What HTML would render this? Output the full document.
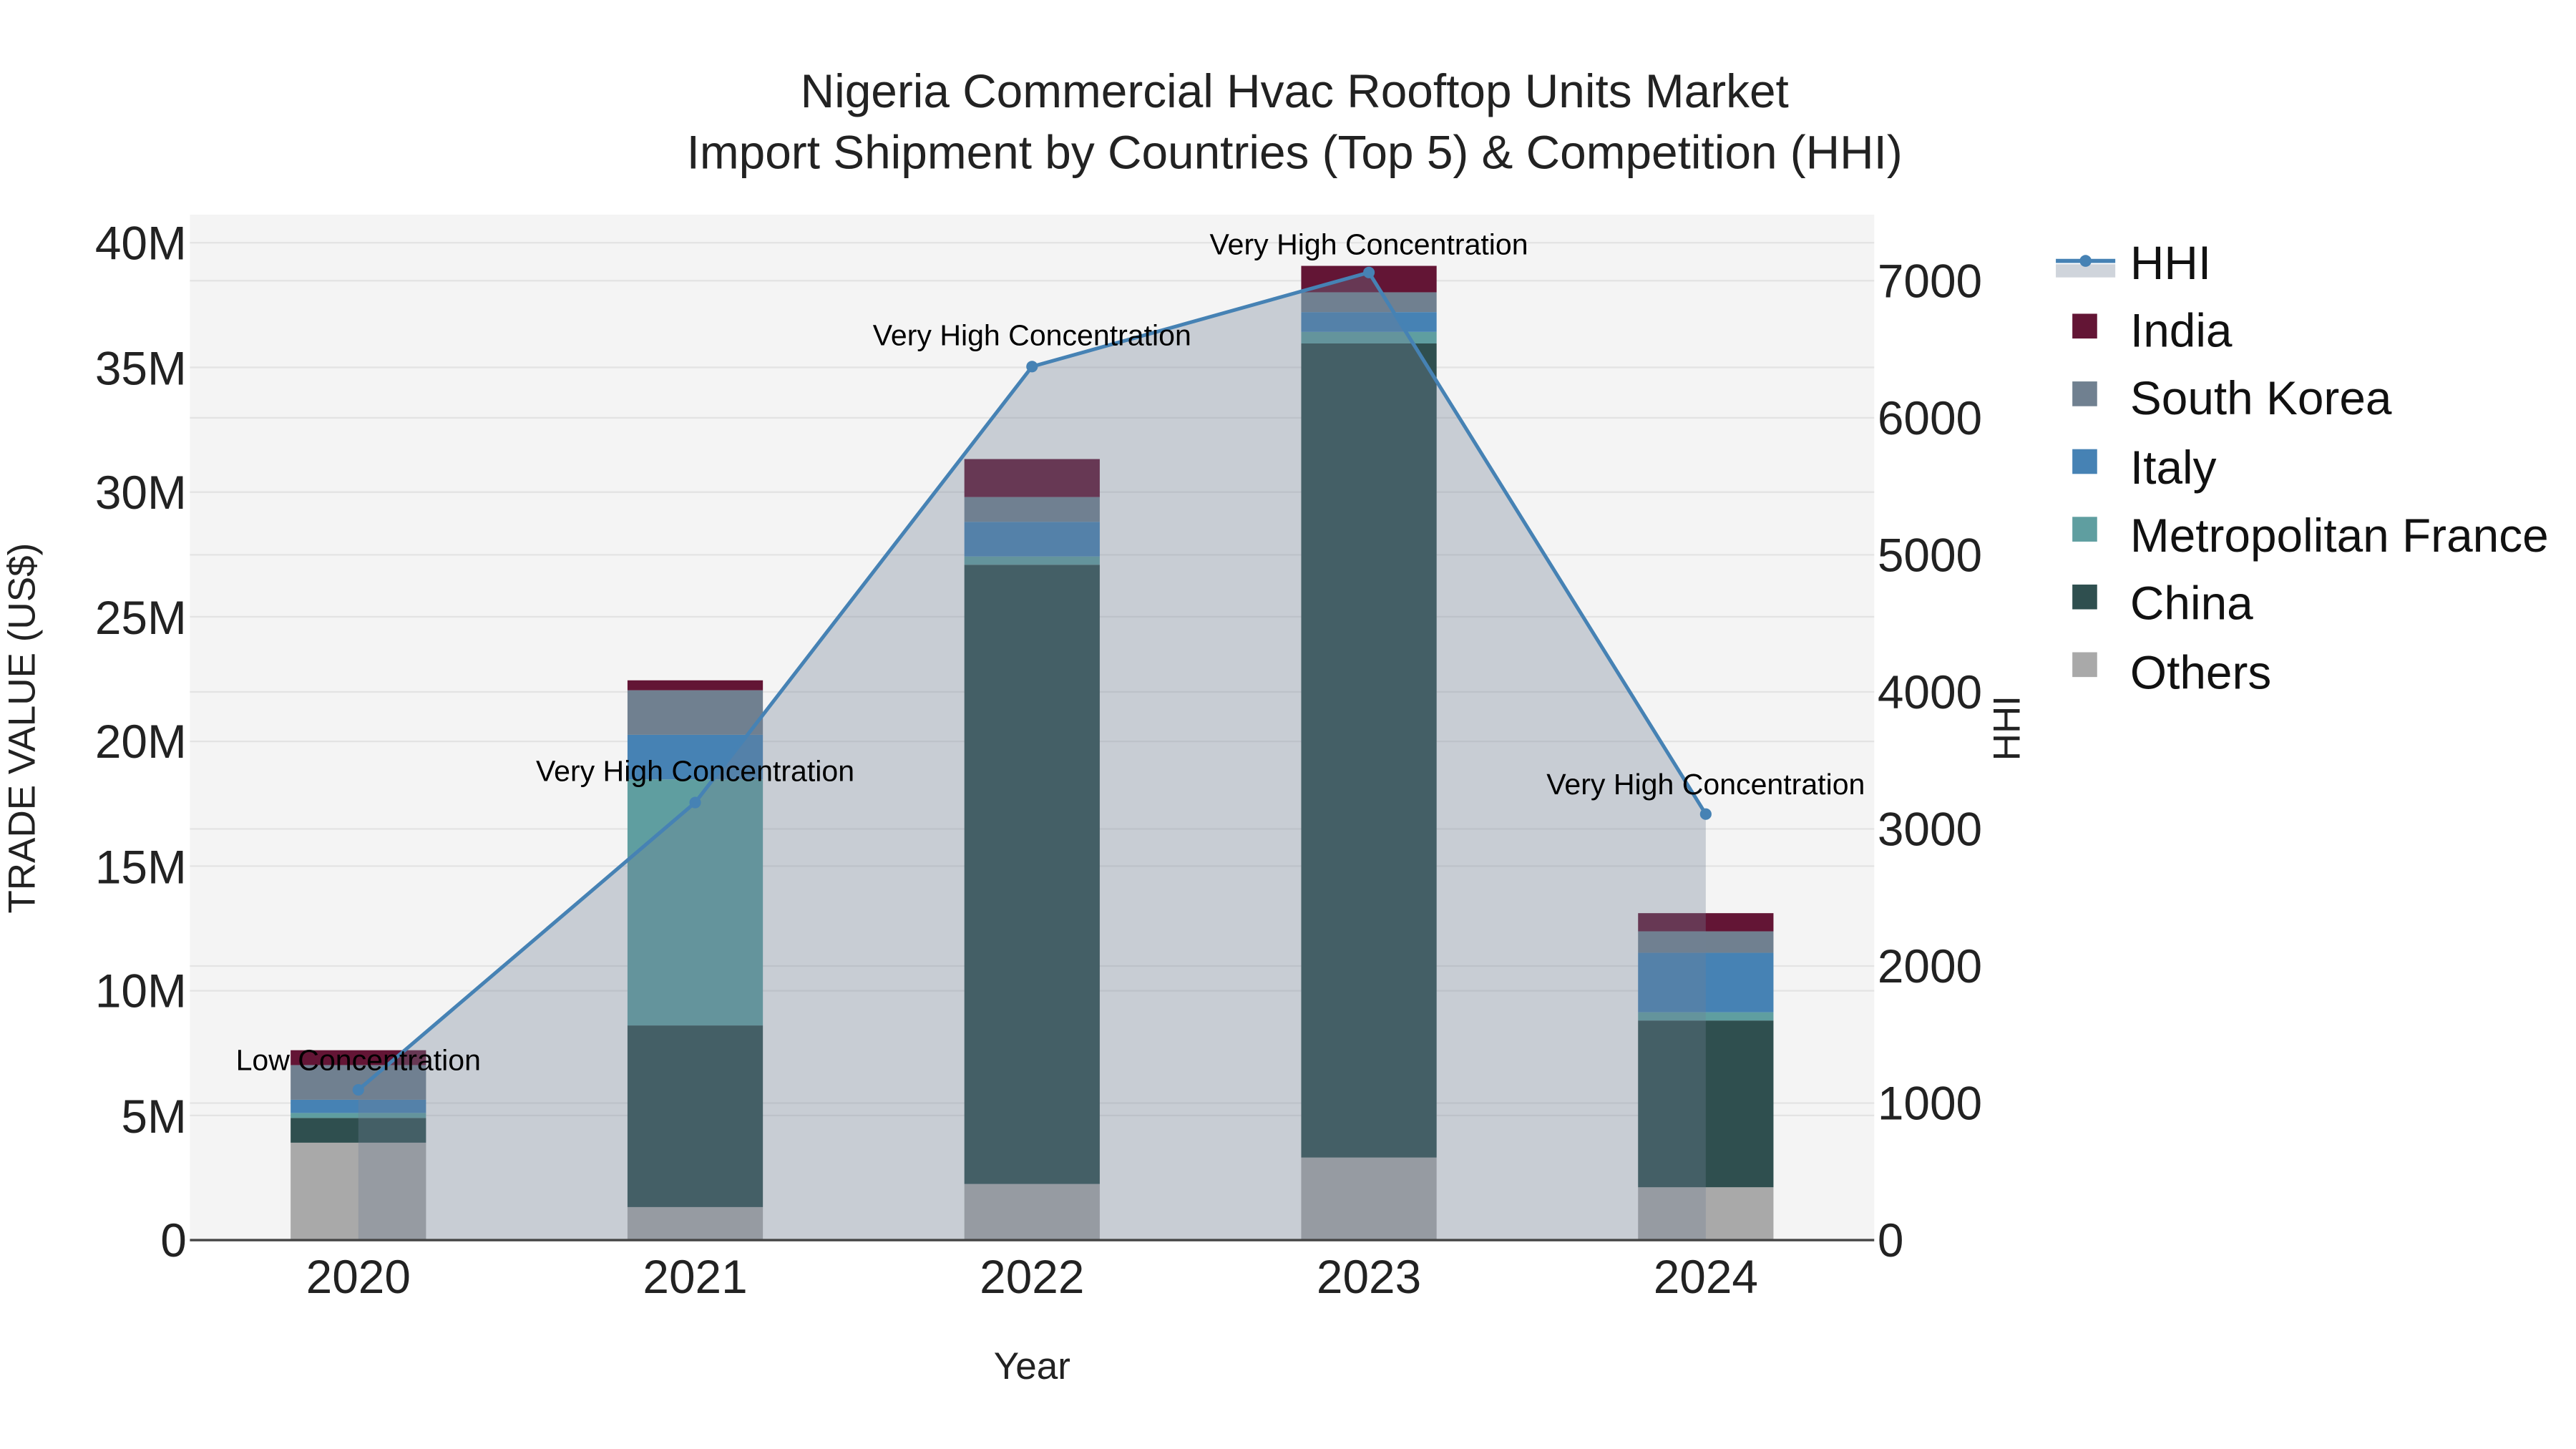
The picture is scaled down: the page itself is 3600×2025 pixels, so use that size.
<!DOCTYPE html>
<html><head><meta charset="utf-8"><style>
html,body{margin:0;padding:0;background:#fff;}
svg{display:block;font-family:"Liberation Sans",Arial,sans-serif;}
</style></head><body>
<svg width="3600" height="2025" viewBox="0 0 1560 877.5" xmlns="http://www.w3.org/2000/svg">
<rect x="0" y="0" width="1560" height="877.5" fill="#fff"/>
<rect x="115" y="130" width="1020" height="621" fill="#f4f4f4"/>
<g stroke="#e3e3e3" stroke-width="1">
<line x1="115" x2="1135" y1="675.5" y2="675.5"/>
<line x1="115" x2="1135" y1="600" y2="600"/>
<line x1="115" x2="1135" y1="524.5" y2="524.5"/>
<line x1="115" x2="1135" y1="449" y2="449"/>
<line x1="115" x2="1135" y1="373.5" y2="373.5"/>
<line x1="115" x2="1135" y1="298" y2="298"/>
<line x1="115" x2="1135" y1="222.5" y2="222.5"/>
<line x1="115" x2="1135" y1="147" y2="147"/>
<line x1="115" x2="1135" y1="668" y2="668"/>
<line x1="115" x2="1135" y1="585" y2="585"/>
<line x1="115" x2="1135" y1="502" y2="502"/>
<line x1="115" x2="1135" y1="419" y2="419"/>
<line x1="115" x2="1135" y1="336" y2="336"/>
<line x1="115" x2="1135" y1="253" y2="253"/>
<line x1="115" x2="1135" y1="170" y2="170"/>
</g>
<g>
<rect x="176" y="692" width="82" height="59" fill="#a9a9a9"/>
<rect x="176" y="677" width="82" height="15" fill="#2f4f4f"/>
<rect x="176" y="674" width="82" height="3" fill="#5f9ea0"/>
<rect x="176" y="666" width="82" height="8" fill="#4682b4"/>
<rect x="176" y="645" width="82" height="21" fill="#708090"/>
<rect x="176" y="636" width="82" height="9" fill="#631535"/>
<rect x="380" y="731" width="82" height="20" fill="#a9a9a9"/>
<rect x="380" y="621" width="82" height="110" fill="#2f4f4f"/>
<rect x="380" y="472" width="82" height="149" fill="#5f9ea0"/>
<rect x="380" y="445" width="82" height="27" fill="#4682b4"/>
<rect x="380" y="418" width="82" height="27" fill="#708090"/>
<rect x="380" y="412" width="82" height="6" fill="#631535"/>
<rect x="584" y="717" width="82" height="34" fill="#a9a9a9"/>
<rect x="584" y="342" width="82" height="375" fill="#2f4f4f"/>
<rect x="584" y="337" width="82" height="5" fill="#5f9ea0"/>
<rect x="584" y="316" width="82" height="21" fill="#4682b4"/>
<rect x="584" y="301" width="82" height="15" fill="#708090"/>
<rect x="584" y="278" width="82" height="23" fill="#631535"/>
<rect x="788" y="701" width="82" height="50" fill="#a9a9a9"/>
<rect x="788" y="208" width="82" height="493" fill="#2f4f4f"/>
<rect x="788" y="201" width="82" height="7" fill="#5f9ea0"/>
<rect x="788" y="189" width="82" height="12" fill="#4682b4"/>
<rect x="788" y="177" width="82" height="12" fill="#708090"/>
<rect x="788" y="161" width="82" height="16" fill="#631535"/>
<rect x="992" y="719" width="82" height="32" fill="#a9a9a9"/>
<rect x="992" y="618" width="82" height="101" fill="#2f4f4f"/>
<rect x="992" y="613" width="82" height="5" fill="#5f9ea0"/>
<rect x="992" y="577" width="82" height="36" fill="#4682b4"/>
<rect x="992" y="564" width="82" height="13" fill="#708090"/>
<rect x="992" y="553" width="82" height="11" fill="#631535"/>
</g>
<polygon points="217,751 217,660 421,486 625,222 829,165 1033,493 1033,751" fill="rgba(112,128,150,0.33)"/>
<line x1="115" x2="1135" y1="751" y2="751" stroke="#444" stroke-width="1.5"/>
<polyline points="217,660 421,486 625,222 829,165 1033,493" fill="none" stroke="#4682b4" stroke-width="2.2"/>
<g fill="#4682b4">
<circle cx="217" cy="660" r="3.5"/><circle cx="421" cy="486" r="3.5"/><circle cx="625" cy="222" r="3.5"/><circle cx="829" cy="165" r="3.5"/><circle cx="1033" cy="493" r="3.5"/>
</g>
<g font-size="17.8" fill="#000" text-anchor="middle">
<text x="217" y="648">Low Concentration</text>
<text x="421" y="473">Very High Concentration</text>
<text x="625" y="209">Very High Concentration</text>
<text x="829" y="154">Very High Concentration</text>
<text x="1033" y="481">Very High Concentration</text>
</g>
<g font-size="28.5" fill="#222" text-anchor="middle">
<text x="784" y="65">Nigeria Commercial Hvac Rooftop Units Market</text>
<text x="784" y="102">Import Shipment by Countries (Top 5) &amp; Competition (HHI)</text>
</g>
<g font-size="28.5" fill="#222" text-anchor="end">
<text x="113" y="761">0</text>
<text x="113" y="686">5M</text>
<text x="113" y="610">10M</text>
<text x="113" y="535">15M</text>
<text x="113" y="459">20M</text>
<text x="113" y="384">25M</text>
<text x="113" y="308">30M</text>
<text x="113" y="233">35M</text>
<text x="113" y="157">40M</text>
</g>
<g font-size="28.5" fill="#222" text-anchor="start">
<text x="1137" y="761">0</text>
<text x="1137" y="678">1000</text>
<text x="1137" y="595">2000</text>
<text x="1137" y="512">3000</text>
<text x="1137" y="429">4000</text>
<text x="1137" y="346">5000</text>
<text x="1137" y="263">6000</text>
<text x="1137" y="180">7000</text>
</g>
<g font-size="28.5" fill="#222" text-anchor="middle">
<text x="217" y="783">2020</text>
<text x="421" y="783">2021</text>
<text x="625" y="783">2022</text>
<text x="829" y="783">2023</text>
<text x="1033" y="783">2024</text>
</g>
<text x="625" y="835" font-size="23" fill="#222" text-anchor="middle">Year</text>
<text transform="translate(21,441) rotate(-90)" font-size="23" fill="#222" text-anchor="middle">TRADE VALUE (US$)</text>
<text transform="translate(1223,441) rotate(-90)" font-size="23" fill="#222" text-anchor="middle">HHI</text>
<rect x="1245" y="160" width="36" height="8" fill="#cfd4db"/>
<line x1="1245" x2="1281" y1="158" y2="158" stroke="#4682b4" stroke-width="2.5"/>
<circle cx="1263" cy="158" r="3.6" fill="#4682b4"/>
<g>
<rect x="1255" y="190" width="15" height="15" fill="#631535"/>
<rect x="1255" y="231" width="15" height="15" fill="#708090"/>
<rect x="1255" y="272" width="15" height="15" fill="#4682b4"/>
<rect x="1255" y="313" width="15" height="15" fill="#5f9ea0"/>
<rect x="1255" y="354" width="15" height="15" fill="#2f4f4f"/>
<rect x="1255" y="395" width="15" height="15" fill="#a9a9a9"/>
</g>
<g font-size="28.5" fill="#111">
<text x="1290" y="169">HHI</text>
<text x="1290" y="210">India</text>
<text x="1290" y="251">South Korea</text>
<text x="1290" y="293">Italy</text>
<text x="1290" y="334">Metropolitan France</text>
<text x="1290" y="375">China</text>
<text x="1290" y="417">Others</text>
</g>
</svg>
</body></html>
